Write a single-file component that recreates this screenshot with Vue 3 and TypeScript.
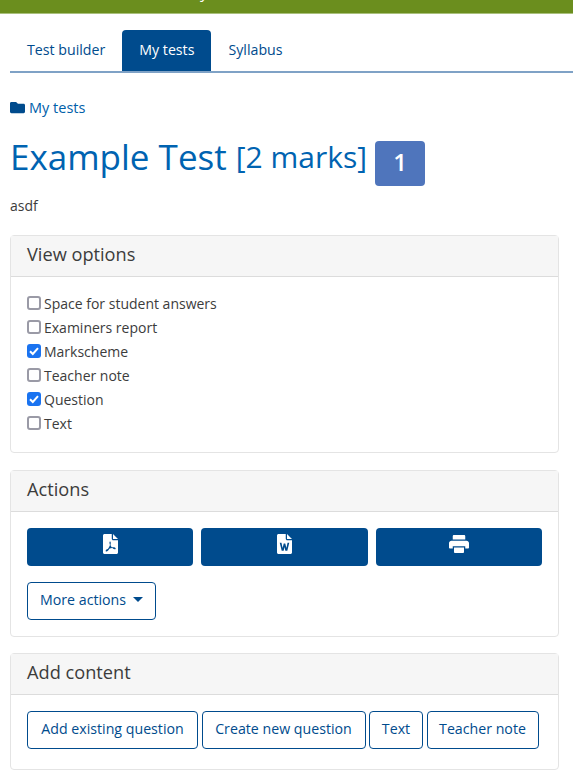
<template>
  <div class="page">
    <header class="topbar"><span class="topbar-text">y</span></header>

    <nav class="tabs">
      <a v-for="tab in tabs" :key="tab" class="tab" :class="{ active: tab === 'My tests' }">{{ tab }}</a>
    </nav>

    <main class="content">
      <div class="crumb">
        <svg class="folder" viewBox="0 0 512 512"><path d="M464 128H272l-54.600-54.600c-6-6-14.100-9.400-22.600-9.400H48C21.500 64 0 85.500 0 112v288c0 26.500 21.500 48 48 48h416c26.500 0 48-21.500 48-48V176c0-26.500-21.500-48-48-48z" /></svg>
        <a>My tests</a>
      </div>

      <h1 class="title">
        <span>Example Test</span>
        <small>[2 marks]</small>
        <span class="count">1</span>
      </h1>
      <p class="desc">asdf</p>

      <section class="card">
        <h2 class="card-head">View options</h2>
        <div class="card-body options">
          <label v-for="opt in options" :key="opt.label" class="option">
            <input v-model="opt.checked" type="checkbox" />
            <span>{{ opt.label }}</span>
          </label>
        </div>
      </section>

      <section class="card">
        <h2 class="card-head">Actions</h2>
        <div class="card-body">
          <div class="export-row">
            <button class="btn-solid" aria-label="PDF">
              <svg class="file-icon" viewBox="0 0 384 512"><path fill-rule="evenodd" d="M40 0H224V120c0 22 18 40 40 40H384V472c0 22-18 40-40 40H40c-22 0-40-18-40-40V40C0 18 18 0 40 0zM256 0L384 128H256zM184 190c-14 0-20 14-18 38 1 18 6 38 13 56-12 34-30 68-50 92-30 12-62 30-62 52 0 14 10 22 22 22 24 0 48-30 72-72 22-8 50-16 78-20 22 20 44 32 62 32 14 0 24-8 24-22 0-22-30-30-72-30-12 0-22 1-30 2-14-14-24-34-32-58 8-28 10-56 6-74-2-12-8-18-13-18z" /></svg>
            </button>
            <button class="btn-solid" aria-label="Word">
              <svg class="file-icon" viewBox="0 0 384 512"><path fill-rule="evenodd" d="M40 0H224V120c0 22 18 40 40 40H384V472c0 22-18 40-40 40H40c-22 0-40-18-40-40V40C0 18 18 0 40 0zM256 0L384 128H256zM70 224L120 430H170L192 330 214 430H264L314 224H270L240 360 212 240H172L144 360 114 224z" /></svg>
            </button>
            <button class="btn-solid" aria-label="Print">
              <svg class="print-icon" viewBox="0 0 512 512" preserveAspectRatio="none"><path d="M128 0H384c18 0 32 14 32 32V128H96V32C96 14 110 0 128 0zM64 160H448c35 0 64 29 64 64V352c0 18-14 32-32 32H416V320H96V384H32c-18 0-32-14-32-32V224c0-35 29-64 64-64zM128 352H384V480c0 18-14 32-32 32H160c-18 0-32-14-32-32z" /></svg>
            </button>
          </div>
          <button class="btn-outline more">More actions <i class="caret"></i></button>
        </div>
      </section>

      <section class="card last">
        <h2 class="card-head">Add content</h2>
        <div class="card-body add-row">
          <button v-for="item in addItems" :key="item" class="btn-outline">{{ item }}</button>
        </div>
      </section>
    </main>
  </div>
</template>

<script setup lang="ts">
import { reactive } from 'vue'

const tabs = ['Test builder', 'My tests', 'Syllabus']
const addItems = ['Add existing question', 'Create new question', 'Text', 'Teacher note']

const options = reactive([
  { label: 'Space for student answers', checked: false },
  { label: 'Examiners report', checked: false },
  { label: 'Markscheme', checked: true },
  { label: 'Teacher note', checked: false },
  { label: 'Question', checked: true },
  { label: 'Text', checked: false },
])
</script>

<style scoped>
.page {
  font-family: "Open Sans", "Noto Sans", sans-serif;
  font-size: 14px;
  color: #3c3c3c;
  height: 784px;
  overflow: hidden;
}

.topbar {
  position: relative;
  height: 14px;
  background: #6b8e1e;
  border-bottom: 1px solid #a9c07c;
  box-sizing: border-box;
  overflow: hidden;
}

.topbar-text {
  position: absolute;
  left: 200px;
  top: -16px;
  color: #fff;
  font-size: 16px;
  line-height: 16px;
}

.tabs {
  display: flex;
  margin: 16px 0 0 10px;
  height: 41px;
  border-bottom: 2px solid #7fa2c6;
}

.tab {
  padding: 0 17px;
  line-height: 40px;
  height: 41px;
  font-size: 14.2px;
  color: #004b8d;
  border-radius: 4px 4px 0 0;
}

.tab.active {
  background: #004b8d;
  color: #fff;
}

.content {
  padding: 0 14px 0 10px;
}

.crumb {
  display: flex;
  align-items: center;
  gap: 4px;
  margin-top: 24px;
  height: 20px;
  font-size: 14.5px;
  color: #0060a9;
}

.folder {
  width: 15px;
  height: 15px;
  fill: #004b8d;
}

.title {
  display: flex;
  align-items: center;
  margin: 11px 0 0;
  font-size: 35px;
  line-height: 56px;
  font-weight: 400;
  color: #0063b1;
  white-space: nowrap;
}

.title small {
  font-size: 30px;
  margin-left: 9px;
}

.count {
  margin: 13px 0 0 8px;
  width: 50px;
  height: 45px;
  line-height: 42px;
  text-align: center;
  font-size: 24px;
  font-weight: 600;
  color: #fff;
  background: #4f75bc;
  border-radius: 4px;
}

.desc {
  margin: 10px 0 0;
  font-size: 14px;
  line-height: 20px;
}

.card {
  margin-top: 17px;
  border: 1px solid #e4e4e4;
  border-radius: 4px;
}

.desc + .card {
  margin-top: 19px;
}

.card.last {
  margin-top: 16px;
}

.card-head {
  margin: 0;
  padding: 0 16px;
  height: 41px;
  line-height: 36px;
  font-size: 18.2px;
  font-weight: 400;
  color: #3c3c3c;
  background: #f6f6f6;
  border-bottom: 1px solid #dcdcdc;
  box-sizing: border-box;
}

.card-body {
  padding: 16px;
}

.options {
  display: flex;
  flex-direction: column;
  padding: 14px 16px 17px;
}

.option {
  display: flex;
  align-items: center;
  gap: 3px;
  height: 24px;
  font-size: 14px;
}

.option input {
  appearance: none;
  width: 14px;
  height: 14px;
  margin: 0;
  border: 2px solid #9a9aa6;
  border-radius: 3px;
  background: #fff;
}

.option input:checked {
  border: 0;
  background: #1a73f0 url("data:image/svg+xml,%3Csvg xmlns='http://www.w3.org/2000/svg' viewBox='0 0 14 14'%3E%3Cpath d='M3 7.200 5.800 10 11 4.200' fill='none' stroke='white' stroke-width='2'/%3E%3C/svg%3E") center / 100% no-repeat;
}

.export-row {
  display: grid;
  grid-template-columns: repeat(3, 1fr);
  gap: 8px;
}

.btn-solid {
  display: flex;
  align-items: center;
  justify-content: center;
  height: 38px;
  padding: 0 0 6px;
  background: #004b8d;
  border: 0;
  border-radius: 4px;
}

.file-icon {
  width: 15px;
  height: 20px;
  fill: #fff;
}

.print-icon {
  width: 20px;
  height: 18px;
  fill: #fff;
}

.btn-outline {
  height: 38px;
  padding: 0 0 3px;
  font-family: inherit;
  font-size: 14.2px;
  color: #004b8d;
  background: #fff;
  border: 1px solid #004b8d;
  border-radius: 4px;
  white-space: nowrap;
}

.more {
  display: flex;
  align-items: center;
  margin-top: 16px;
  padding: 0 12px 3px;
}

.caret {
  margin-left: 7px;
  margin-top: -1px;
  border-top: 5px solid #004b8d;
  border-left: 5px solid transparent;
  border-right: 5px solid transparent;
}

.add-row {
  display: grid;
  grid-template-columns: 171px 164px 54px 112px;
  gap: 3.5px;
  padding-bottom: 20px;
}
</style>
